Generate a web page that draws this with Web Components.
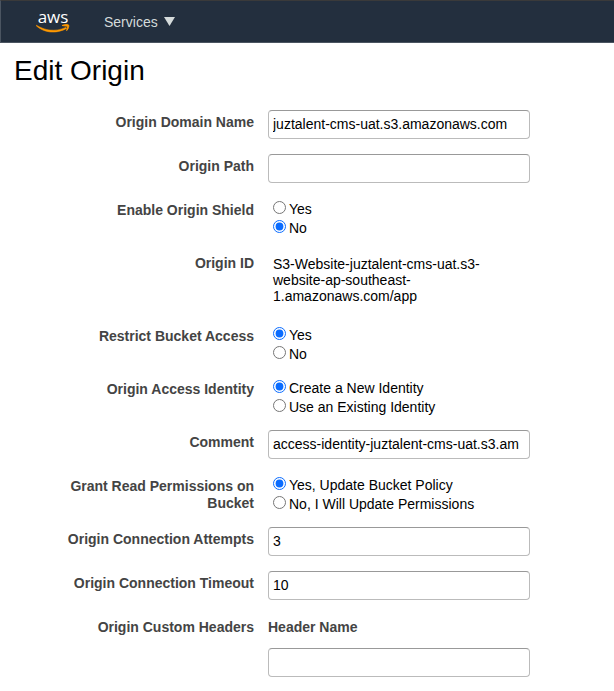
<!DOCTYPE html>
<html lang="en">
<head>
<meta charset="utf-8">
<meta name="viewport" content="width=device-width, initial-scale=1">
<title>Edit Origin</title>
<style>
  body {
    margin: 0;
    background: #fff;
    color: #000;
    font: 14px/16px "Liberation Sans", Arial, Helvetica, sans-serif;
  }
</style>
</head>
<body>
<origin-page></origin-page>

<script>
// Two-column row shared by every kind of form field.
const ROW_STYLE = `
  :host { display: block; }
  .row { display: grid; grid-template-columns: 200px minmax(0, 262px); column-gap: 14px; align-items: start; }
  .name { padding-top: 4px; text-align: right; font-weight: bold; line-height: 17px; color: #444; }
  input[type="text"] {
    box-sizing: border-box; width: 100%; height: 29px; padding: 0 4px 2px; margin: 0;
    border: 1px solid #bbb; border-top-color: #999; border-radius: 4px;
    background: #fff; color: #000; font: inherit;
  }
`;

class AwsLogo extends HTMLElement {
  constructor() {
    super();
    this.attachShadow({ mode: 'open' }).innerHTML = `
      <style>
        :host { display: block; }
        a { display: flex; flex-direction: column; align-items: center; width: 34px; text-decoration: none; color: #fff; }
        span { font: 500 17px/14px "Open Sans", "Noto Sans", sans-serif; }
        svg { display: block; width: 34px; height: 9px; }
      </style>
      <a href="#" aria-label="aws home"><span>aws</span>
        <svg viewBox="0 0 34 9" aria-hidden="true">
          <path d="M.4 1.200C8.500 6.300 19 8.400 29.800 3.400L30.600 4.400C20 10.400 8 8.800 .2 1.800Z" fill="#f90" stroke="#f90" stroke-width=".5" stroke-linejoin="round"/>
          <path d="M26 1.500C28.600.4 31.700.3 32.600 1C33.300 2 32.300 5 30.700 6.600L31.600 2.200Z" fill="#f90" stroke="#f90" stroke-width=".9" stroke-linejoin="round"/>
        </svg>
      </a>`;
  }
}
customElements.define('aws-logo', AwsLogo);

class TopBar extends HTMLElement {
  constructor() {
    super();
    this.attachShadow({ mode: 'open' }).innerHTML = `
      <style>
        :host { display: block; }
        header {
          box-sizing: border-box; height: 43px; padding: 0 35px;
          display: flex; align-items: center; gap: 34px;
          background: #232f3e; border: solid #4b5561; border-width: 1px 0 1px 1px; border-top-color: #3a3a3a;
        }
        button {
          display: flex; align-items: center; gap: 6px; padding: 0; border: 0;
          background: none; color: #d5dbdb; font: inherit;
        }
        svg { display: block; width: 11px; height: 9px; }
      </style>
      <header>
        <aws-logo></aws-logo>
        <button type="button" aria-haspopup="true">Services
          <svg viewBox="0 0 11 9" aria-hidden="true"><path d="M0 0H11L5.500 9Z" fill="#d5dbdb"/></svg>
        </button>
      </header>`;
  }
}
customElements.define('top-bar', TopBar);

class TextField extends HTMLElement {
  connectedCallback() {
    if (this.shadowRoot) return;
    this.attachShadow({ mode: 'open' }).innerHTML = `
      <style>${ROW_STYLE}</style>
      <div class="row">
        <label class="name" for="field"></label>
        <input id="field" type="text">
      </div>`;
    this.shadowRoot.querySelector('label').textContent = this.getAttribute('label');
    this.shadowRoot.querySelector('input').value = this.getAttribute('value') || '';
  }
}
customElements.define('text-field', TextField);

class RadioField extends HTMLElement {
  connectedCallback() {
    if (this.shadowRoot) return;
    this.attachShadow({ mode: 'open' }).innerHTML = `
      <style>${ROW_STYLE}
        .options { display: grid; padding: 0 0 0 5px; }
        .option { display: flex; align-items: flex-start; gap: 3px; height: 19px; line-height: 22px; }
        .option input { margin: 3px 0 0; width: 13px; height: 13px; flex: none; accent-color: #0a6cff; }
      </style>
      <div class="row" role="radiogroup" aria-labelledby="name">
        <div class="name" id="name"></div>
        <div class="options"></div>
      </div>`;
    this.shadowRoot.querySelector('.name').textContent = this.getAttribute('label');
    const box = this.shadowRoot.querySelector('.options');
    const selected = Number(this.getAttribute('selected'));
    this.getAttribute('options').split('|').forEach((text, i) => {
      const option = document.createElement('label');
      option.className = 'option';
      const input = document.createElement('input');
      input.type = 'radio';
      input.name = 'choice';
      input.checked = i === selected;
      const caption = document.createElement('span');
      caption.textContent = text;
      option.append(input, caption);
      box.append(option);
    });
  }
}
customElements.define('radio-field', RadioField);

class StaticField extends HTMLElement {
  connectedCallback() {
    if (this.shadowRoot) return;
    this.attachShadow({ mode: 'open' }).innerHTML = `
      <style>${ROW_STYLE} .value { padding: 5px; }</style>
      <div class="row">
        <div class="name"></div>
        <div class="value"><slot></slot></div>
      </div>`;
    this.shadowRoot.querySelector('.name').textContent = this.getAttribute('label');
  }
}
customElements.define('static-field', StaticField);

class HeaderField extends HTMLElement {
  connectedCallback() {
    if (this.shadowRoot) return;
    this.attachShadow({ mode: 'open' }).innerHTML = `
      <style>${ROW_STYLE}
        .stack { display: grid; gap: 12px; }
        .stack .name { text-align: left; }
      </style>
      <div class="row">
        <div class="name"></div>
        <div class="stack">
          <label class="name" for="header">Header Name</label>
          <input id="header" type="text">
        </div>
      </div>`;
    this.shadowRoot.querySelector('.name').textContent = this.getAttribute('label');
  }
}
customElements.define('header-field', HeaderField);

class OriginPage extends HTMLElement {
  constructor() {
    super();
    this.attachShadow({ mode: 'open' }).innerHTML = `
      <style>
        :host { display: block; }
        h1 { margin: 0; padding: 12px 14px 0; font-size: 28px; line-height: 32px; font-weight: normal; }
        form { display: grid; gap: 15px; padding: 23px 14px 14px 54px; }
      </style>
      <top-bar></top-bar>
      <main>
        <h1>Edit Origin</h1>
        <form>
          <text-field label="Origin Domain Name" value="juztalent-cms-uat.s3.amazonaws.com"></text-field>
          <text-field label="Origin Path"></text-field>
          <radio-field label="Enable Origin Shield" options="Yes|No" selected="1"></radio-field>
          <static-field label="Origin ID">S3-Website-juztalent-cms-uat.s3-website-ap-southeast-1.amazonaws.com/app</static-field>
          <radio-field label="Restrict Bucket Access" options="Yes|No" selected="0"></radio-field>
          <radio-field label="Origin Access Identity" options="Create a New Identity|Use an Existing Identity" selected="0"></radio-field>
          <text-field label="Comment" value="access-identity-juztalent-cms-uat.s3.am"></text-field>
          <radio-field label="Grant Read Permissions on Bucket" options="Yes, Update Bucket Policy|No, I Will Update Permissions" selected="0"></radio-field>
          <text-field label="Origin Connection Attempts" value="3"></text-field>
          <text-field label="Origin Connection Timeout" value="10"></text-field>
          <header-field label="Origin Custom Headers"></header-field>
        </form>
      </main>`;
  }
}
customElements.define('origin-page', OriginPage);
</script>
</body>
</html>
